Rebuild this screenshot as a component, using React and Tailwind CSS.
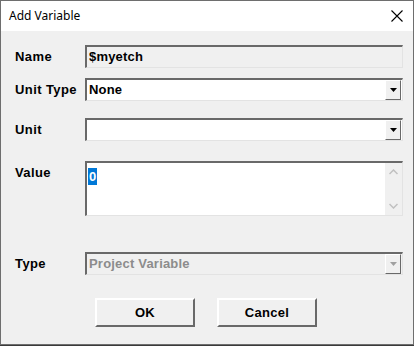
import React from "react";

const sunken =
  "border-t-2 border-l-2 border-t-[#696969] border-l-[#696969] border-b border-r border-b-[#e3e3e3] border-r-[#e3e3e3]";

const DropButton = ({ disabled }) => (
  <div className="w-[16px] h-[20px] bg-[#f0f0f0] border border-t-white border-l-white border-b-[#696969] border-r-[#696969] flex items-center justify-center mr-[1px]">
    <svg width="7" height="4" viewBox="0 0 7 4">
      <path d="M0 0h7L3.5 4z" fill={disabled ? "#a0a0a0" : "#000"} />
    </svg>
  </div>
);

const Label = ({ children, className = "" }) => (
  <div className={`w-[70px] shrink-0 font-bold text-[13px] tracking-[0.4px] text-black whitespace-nowrap ${className}`}>{children}</div>
);

export default function App() {
  return (
    <div
      className="w-[414px] h-[346px] bg-[#3a3a3a] overflow-hidden"
      style={{ fontFamily: '"Liberation Sans", Arial, sans-serif' }}
    >
      <div className="w-[414px] h-[345px] border border-[#6e6e6e] bg-[#f0f0f0] flex flex-col">
        {/* Title bar */}
        <div className="h-[30px] bg-white flex items-center justify-between pl-[8px] pr-[10px] shrink-0">
          <span className="text-[12px] text-black" style={{ fontFamily: '"Noto Sans", "Open Sans", sans-serif' }}>
            Add Variable
          </span>
          <svg width="12" height="12" viewBox="0 0 12 12">
            <path d="M0.5 0.5L11.5 11.5M11.5 0.5L0.5 11.5" stroke="#000" strokeWidth="1.1" />
          </svg>
        </div>

        <div className="flex flex-col pl-[14px] pr-[10px] pt-[14px]">
          {/* Name */}
          <div className="flex items-center h-[23px]">
            <Label>Name</Label>
            <div className={`flex-1 h-[23px] ${sunken} bg-[#f0f0f0] flex items-center pl-[2px]`}>
              <span className="font-bold text-[13px] tracking-[0.2px] text-black">$myetch</span>
            </div>
          </div>

          {/* Unit Type */}
          <div className="flex items-center h-[23px] mt-[10px]">
            <Label>Unit Type</Label>
            <div className={`flex-1 h-[23px] ${sunken} bg-white flex items-center justify-between pl-[2px]`}>
              <span className="font-bold text-[13px] tracking-[0.2px] text-black">None</span>
              <DropButton />
            </div>
          </div>

          {/* Unit */}
          <div className="flex items-center h-[23px] mt-[17px]">
            <Label>Unit</Label>
            <div className={`flex-1 h-[23px] ${sunken} bg-white flex items-center justify-end`}>
              <DropButton />
            </div>
          </div>

          {/* Value */}
          <div className="flex items-start mt-[20px]">
            <Label className="pt-[2px]">Value</Label>
            <div className={`flex-1 h-[55px] ${sunken} bg-white flex`}>
              <div className="flex-1 pl-[1px] pt-[1px]">
                <span className="bg-[#0078d7] text-white font-bold text-[13px] px-[1px] leading-[17px] inline-block">0</span>
              </div>
              <div className="w-[17px] bg-[#f0f0f0] flex flex-col items-center justify-between py-[6px]">
                <svg width="9" height="6" viewBox="0 0 9 6">
                  <path d="M0.5 5L4.5 1L8.5 5" stroke="#c0c0c0" strokeWidth="1.5" fill="none" />
                </svg>
                <svg width="9" height="6" viewBox="0 0 9 6">
                  <path d="M0.5 1L4.5 5L8.5 1" stroke="#c0c0c0" strokeWidth="1.5" fill="none" />
                </svg>
              </div>
            </div>
          </div>

          {/* Type */}
          <div className="flex items-center h-[23px] mt-[36px]">
            <Label>Type</Label>
            <div className={`flex-1 h-[23px] ${sunken} bg-[#f0f0f0] flex items-center justify-between pl-[2px]`}>
              <span className="font-bold text-[13px] tracking-[0.2px] text-[#8c8c8c]">Project Variable</span>
              <DropButton disabled />
            </div>
          </div>

          {/* Buttons */}
          <div className="flex gap-[22px] mt-[23px] pl-[80px]">
            <button className="w-[100px] h-[29px] bg-[#f0f0f0] border-2 border-t-white border-l-white border-b-[#696969] border-r-[#696969] font-bold text-[13px] tracking-[0.3px] text-black">
              OK
            </button>
            <button className="w-[100px] h-[29px] bg-[#f0f0f0] border-2 border-t-white border-l-white border-b-[#696969] border-r-[#696969] font-bold text-[13px] tracking-[0.3px] text-black">
              Cancel
            </button>
          </div>
        </div>
      </div>
    </div>
  );
}
